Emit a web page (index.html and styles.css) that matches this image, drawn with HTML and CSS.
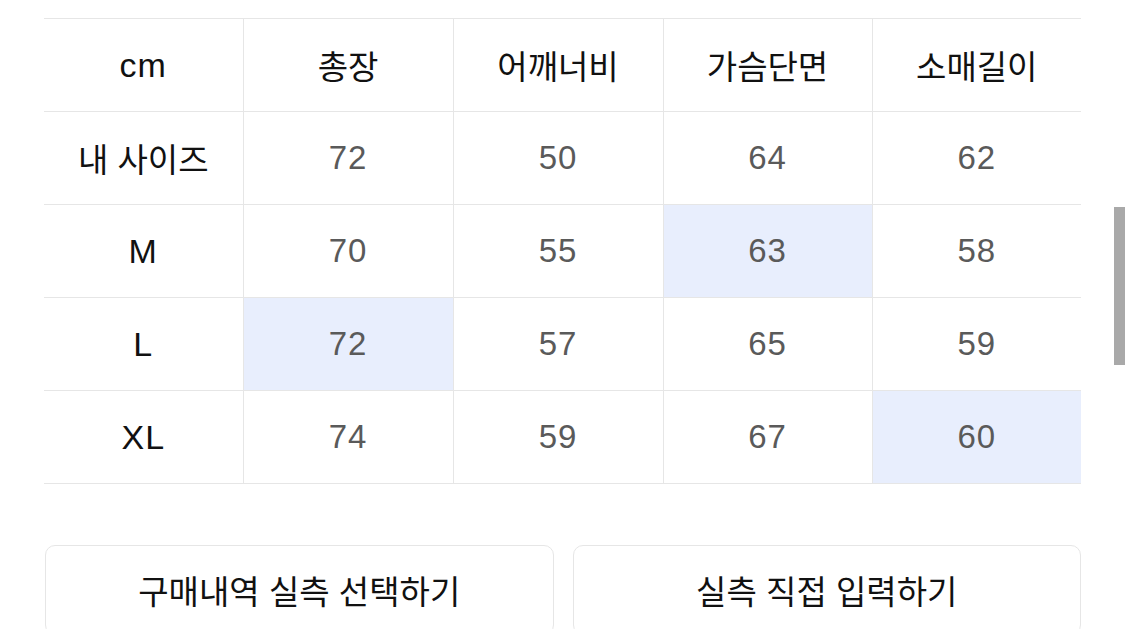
FILE: index.html
```html
<!DOCTYPE html>
<html lang="ko">
<head>
<meta charset="utf-8">
<link rel="stylesheet" href="styles.css">
</head>
<body>
<div class="page">
  <table class="size-table">
    <colgroup>
      <col class="c-label"><col class="c-wide"><col class="c-wide"><col class="c-std"><col class="c-std">
    </colgroup>
    <thead>
      <tr><th class="latin">cm</th><th>총장</th><th>어깨너비</th><th>가슴단면</th><th>소매길이</th></tr>
    </thead>
    <tbody>
      <tr><th>내 사이즈</th><td>72</td><td>50</td><td>64</td><td>62</td></tr>
      <tr><th class="latin">M</th><td>70</td><td>55</td><td class="hl">63</td><td>58</td></tr>
      <tr><th class="latin">L</th><td class="hl">72</td><td>57</td><td>65</td><td>59</td></tr>
      <tr><th class="latin">XL</th><td>74</td><td>59</td><td>67</td><td class="hl">60</td></tr>
    </tbody>
  </table>
  <div class="actions">
    <button class="btn">구매내역 실측 선택하기</button>
    <button class="btn">실측 직접 입력하기</button>
  </div>
</div>
<div class="scrollbar"></div>
</body>
</html>
```
FILE: styles.css
```css
html, body {
  margin: 0;
  padding: 0;
  background: #fff;
  overflow: hidden;
}
body {
  font-family: "Noto Sans CJK KR", "Noto Sans", sans-serif;
  width: 1125px;
  height: 629px;
  position: relative;
}
.page {
  padding: 18px 44px 0 44px;
  width: 1037px;
}
.size-table {
  border-collapse: collapse;
  width: 1037px;
  table-layout: fixed;
}
.c-label { width: 199px; }
.c-wide { width: 210px; }
.c-std { width: 209px; }
.size-table th, .size-table td {
  height: 92px;
  border: 1px solid #e6e6e6;
  text-align: center;
  vertical-align: middle;
  font-size: 33px;
  line-height: 36px;
  font-weight: 400;
  padding: 0;
}
.size-table tr > *:first-child { border-left: none; }
.size-table tr > *:last-child { border-right: none; }
.size-table th {
  color: #111;
  font-family: "Noto Sans CJK KR", sans-serif;
}
.size-table th.latin {
  font-family: "Liberation Sans", sans-serif;
  font-size: 34px;
  letter-spacing: 1px;
}
.size-table td {
  color: #5a5a5a;
  font-family: "Liberation Sans", sans-serif;
  font-size: 33px;
  letter-spacing: 1px;
}
.size-table td.hl { background: #e8eefd; }
.actions {
  display: flex;
  gap: 19px;
  margin-top: 61px;
  margin-left: 1px;
}
.btn {
  flex: 1;
  height: 90px;
  background: #fff;
  border: 1px solid #e6e6e6;
  border-radius: 10px;
  font-family: "Noto Sans CJK KR", sans-serif;
  font-size: 33px;
  line-height: 36px;
  color: #111;
  padding: 0;
}
.scrollbar {
  position: absolute;
  left: 1114px;
  top: 207px;
  width: 11px;
  height: 158px;
  background: #a9a9a9;
}
```
